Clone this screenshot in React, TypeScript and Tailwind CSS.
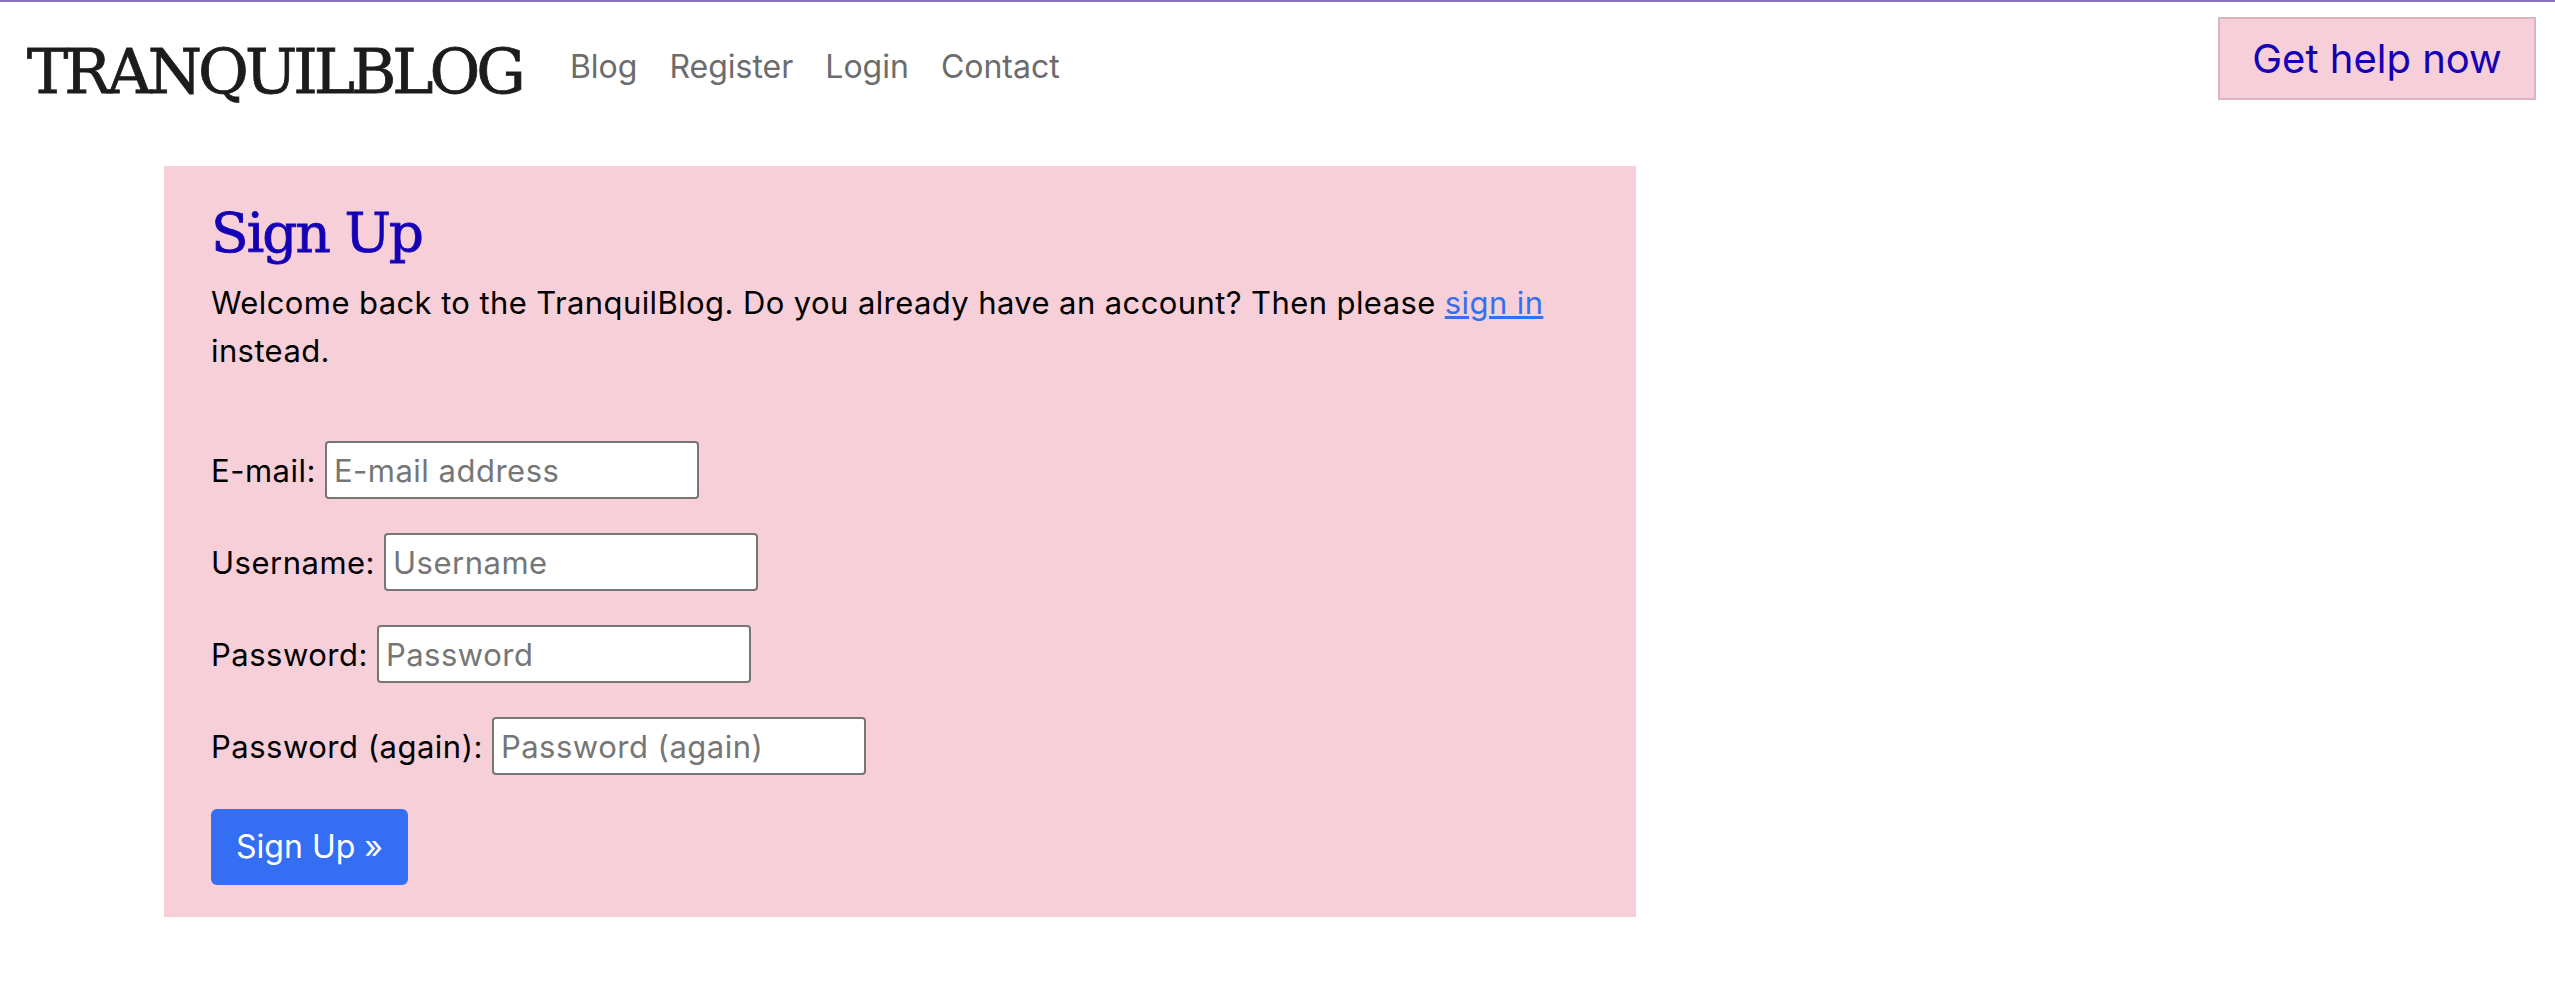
import React from "react";

const slab = { fontFamily: '"DejaVu Serif", "Liberation Serif", serif' };

function Row({ label, placeholder, type }: { label: string; placeholder: string; type: string }) {
  return (
    <div className="flex items-center h-[58px]">
      <label className="text-[31px] tracking-[0.5px] leading-none text-black whitespace-nowrap">{label}</label>
      <input
        type={type}
        placeholder={placeholder}
        className="ml-[9px] w-[374px] h-[58px] bg-white border-2 border-[#767676] rounded-[4px] px-[7px] text-[31px] tracking-[0.5px] text-black placeholder:text-[#767676] outline-none"
        style={{ fontFamily: "Inter, sans-serif" }}
      />
    </div>
  );
}

export default function App() {
  return (
    <div
      className="min-h-screen bg-white border-t-2 border-[#8f70bf]"
      style={{ fontFamily: "Inter, 'Noto Sans', sans-serif" }}
    >
      <header className="flex items-start justify-between pl-[27px] pr-[19px]">
        <div className="flex items-start">
          <div
            className="mt-[39px] text-[62px] leading-none text-[#1c1c1c] tracking-[-4px] [-webkit-text-stroke:0.8px_#1c1c1c]"
            style={slab}
          >
            TRANQUILBLOG
          </div>
          <nav className="flex gap-[32px] ml-[48px] mt-[49px] text-[32px] leading-none text-[#6c6c6c]">
            <a href="#">Blog</a>
            <a href="#">Register</a>
            <a href="#">Login</a>
            <a href="#">Contact</a>
          </nav>
        </div>
        <button className="mt-[15px] w-[318px] h-[83px] flex items-center justify-center bg-[#f6cfd9] border-2 border-[#dcb3c1] text-[40px] leading-none text-[#1500b5]">
          Get help now
        </button>
      </header>

      <main className="ml-[164px] mt-[63px] w-[1472px] bg-[#f6cfd9] pl-[47px] pr-[50px] pt-[40px] pb-[32px]">
        <h1
          className="text-[55px] leading-none text-[#1500b5] tracking-[-2px] [-webkit-text-stroke:0.8px_#1500b5]"
          style={slab}
        >
          Sign Up
        </h1>
        <p className="mt-[18px] text-[31px] tracking-[0.4px] leading-[48px] text-black w-[1360px]">
          Welcome back to the TranquilBlog. Do you already have an account? Then please{" "}
          <a href="#" className="text-[#3470f2] underline">
            sign in
          </a>{" "}
          instead.
        </p>
        <form className="mt-[66px] flex flex-col gap-[34px]">
          <Row label="E-mail:" placeholder="E-mail address" type="email" />
          <Row label="Username:" placeholder="Username" type="text" />
          <Row label="Password:" placeholder="Password" type="password" />
          <Row label="Password (again):" placeholder="Password (again)" type="password" />
          <div>
            <button
              type="button"
              className="w-[197px] h-[76px] bg-[#346ef3] rounded-[6px] text-white text-[32px] leading-none"
            >
              Sign Up »
            </button>
          </div>
        </form>
      </main>
    </div>
  );
}
